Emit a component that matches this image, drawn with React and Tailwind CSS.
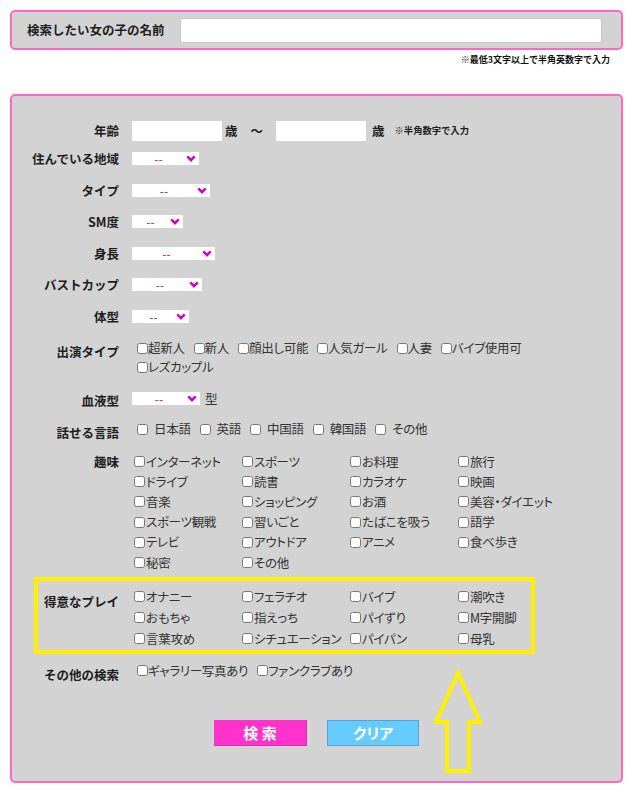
import React from 'react';

const jp = "font-['Noto_Sans_CJK_JP','Noto_Sans',sans-serif]";

function Label({ children, className = '' }) {
  return (
    <div className={'w-[107px] shrink-0 text-right font-bold text-[12.5px] text-[#1e1e1e] ' + className}>
      {children}
    </div>
  );
}

function Select({ className }) {
  return (
    <div className={'relative h-[13px] bg-white ' + className}>
      <select className="block w-full h-[13px] appearance-none bg-white border-0 p-0 pr-[14px] text-[12px] leading-[13px] text-[#cc00cc] outline-none [text-align-last:center]">
        <option>--</option>
      </select>
      <svg className="absolute right-[3px] top-[3px] pointer-events-none" width="10" height="7" viewBox="0 0 10 7">
        <path d="M1.3 1.3 L5 5.2 L8.7 1.3" fill="none" stroke="#cc00cc" strokeWidth="2.4" />
      </svg>
    </div>
  );
}

function Check({ text, className = '', gap = '' }) {
  return (
    <label className={'inline-flex items-center whitespace-nowrap ' + className}>
      <input type="checkbox" className="m-0 w-[11px] h-[11px] shrink-0" />
      <span className={"text-[12.5px] leading-[16px] text-[#333] tracking-[-0.3px] [font-feature-settings:'palt'] " + gap}>{text}</span>
    </label>
  );
}

const hobbies = [
  'インターネット', 'スポーツ', 'お料理', '旅行',
  'ドライブ', '読書', 'カラオケ', '映画',
  '音楽', 'ショッピング', 'お酒', '美容・ダイエット',
  'スポーツ観戦', '習いごと', 'たばこを吸う', '語学',
  'テレビ', 'アウトドア', 'アニメ', '食べ歩き',
  '秘密', 'その他',
];

const plays = [
  'オナニー', 'フェラチオ', 'バイブ', '潮吹き',
  'おもちゃ', '指えっち', 'パイずり', 'M字開脚',
  '言葉攻め', 'シチュエーション', 'パイパン', '母乳',
];

export default function App() {
  return (
    <div className={'w-[635px] min-h-[795px] bg-white pt-[10px] ' + jp}>
      {/* name search */}
      <div className="ml-[10px] w-[613px] h-[40px] flex items-center border-2 border-[#ff66cc] rounded-[5px] bg-[#d3d3d3]">
        <div className="pl-[15px] font-bold text-[12.5px] text-[#1e1e1e] leading-[14px]">検索したい女の子の名前</div>
        <input type="text" className="ml-auto mr-[19px] w-[422px] h-[25px] bg-white border border-[#c8c8c8] outline-none" />
      </div>
      <div className="mt-[4px] pr-[25px] text-right font-bold text-[9px] leading-[12px] text-[#111]">
        ※最低3文字以上で半角英数字で入力
      </div>

      {/* detail search */}
      <div className="relative mt-[28px] ml-[10px] w-[613px] border-2 border-[#ff66cc] rounded-[5px] bg-[#d3d3d3] pt-[25px] pb-[35px]">
        <div className="flex items-center h-[20px]">
          <Label className="leading-[14px]">年齢</Label>
          <div className="ml-[13px] flex items-center">
            <input type="text" className="w-[90px] h-[20px] bg-white border-0 outline-none" />
            <span className="ml-[3px] font-bold text-[12.5px] text-[#1e1e1e]">歳</span>
            <span className="ml-[13px] font-bold text-[12.5px] text-[#1e1e1e]">〜</span>
            <input type="text" className="ml-[13px] w-[90px] h-[20px] bg-white border-0 outline-none" />
            <span className="ml-[6px] font-bold text-[12.5px] text-[#1e1e1e]">歳</span>
            <span className="ml-[10px] font-bold text-[9.3px] text-[#1e1e1e]">※半角数字で入力</span>
          </div>
        </div>

        <div className="mt-[11px] flex items-center h-[13px]">
          <Label className="leading-[13px]">住んでいる地域</Label>
          <Select className="ml-[13px] w-[67px]" />
        </div>
        <div className="mt-[19px] flex items-center h-[13px]">
          <Label className="leading-[13px]">タイプ</Label>
          <Select className="ml-[13px] w-[78px]" />
        </div>
        <div className="mt-[18px] flex items-center h-[13px]">
          <Label className="leading-[13px]">SM度</Label>
          <Select className="ml-[13px] w-[51px]" />
        </div>
        <div className="mt-[19px] flex items-center h-[13px]">
          <Label className="leading-[13px]">身長</Label>
          <Select className="ml-[13px] w-[83px]" />
        </div>
        <div className="mt-[18px] flex items-center h-[13px]">
          <Label className="leading-[13px]">バストカップ</Label>
          <Select className="ml-[13px] w-[70px]" />
        </div>
        <div className="mt-[19px] flex items-center h-[13px]">
          <Label className="leading-[13px]">体型</Label>
          <Select className="ml-[13px] w-[57px]" />
        </div>

        <div className="mt-[15.5px] flex items-start h-[38px]">
          <Label className="leading-[19px] pt-[3px]">出演タイプ</Label>
          <div className="ml-[13px] leading-[19px]">
            <div className="flex h-[19px] items-center">
              <Check text="超新人" className="ml-[5px] mr-[4px]" />
              <Check text="新人" className="ml-[5px] mr-[4px]" />
              <Check text="顔出し可能" className="ml-[5px] mr-[4px]" />
              <Check text="人気ガール" className="ml-[5px] mr-[4px]" />
              <Check text="人妻" className="ml-[5px] mr-[4px]" />
              <Check text="バイブ使用可" className="ml-[5px] mr-[4px]" />
            </div>
            <div className="flex h-[19px] items-center">
              <Check text="レズカップル" className="ml-[5px]" />
            </div>
          </div>
        </div>

        <div className="mt-[15.5px] flex items-center h-[13px]">
          <Label className="leading-[13px] pt-[3px]">血液型</Label>
          <Select className="ml-[13px] w-[68px]" />
          <span className="ml-[5px] text-[12.5px] text-[#333] leading-[13px]">型</span>
        </div>

        <div className="mt-[14.5px] flex items-start h-[19px]">
          <Label className="leading-[19px] pt-[3px]">話せる言語</Label>
          <div className="ml-[13px] flex h-[19px] items-center">
            <Check text="日本語" className="ml-[5px] mr-[4px]" gap="ml-[6px]" />
            <Check text="英語" className="ml-[5px] mr-[4px]" gap="ml-[6px]" />
            <Check text="中国語" className="ml-[5px] mr-[4px]" gap="ml-[6px]" />
            <Check text="韓国語" className="ml-[5px] mr-[4px]" gap="ml-[6px]" />
            <Check text="その他" className="ml-[5px]" gap="ml-[6px]" />
          </div>
        </div>

        <div className="mt-[13px] flex items-start">
          <Label className="leading-[20px]">趣味</Label>
          <div className="ml-[13px] grid grid-cols-[108px_108px_108px_108px]">
            {hobbies.map((h) => (
              <div key={h} className="h-[20.2px] flex items-center">
                <Check text={h} className="ml-[2px]" gap="ml-[1px]" />
              </div>
            ))}
          </div>
        </div>

        <div className="mt-[4px] ml-[22px] w-[501px] border-4 border-[#fff000] pt-[5.5px] pb-[0.5px] flex items-start">
          <div className="w-[81px] shrink-0 text-right font-bold text-[12.5px] text-[#1e1e1e] leading-[21px] pt-[5px]">得意なプレイ</div>
          <div className="ml-[13px] grid grid-cols-[108px_108px_108px_75px]">
            {plays.map((p) => (
              <div key={p} className="h-[21px] flex items-center">
                <Check text={p} className="ml-[2px]" gap="ml-[1px]" />
              </div>
            ))}
          </div>
        </div>

        <div className="mt-[7.5px] flex items-start h-[19px]">
          <Label className="leading-[19px] pt-[4px]">その他の検索</Label>
          <div className="ml-[13px] flex h-[19px] items-center">
            <Check text="ギャラリー写真あり" className="ml-[5px] mr-[4px]" />
            <Check text="ファンクラブあり" className="ml-[5px]" />
          </div>
        </div>

        <div className="mt-[39.5px] flex justify-center gap-[20px]">
          <button type="button" className="w-[93px] h-[26px] bg-[#ff33cc] border-b border-r border-[#d92aad] text-white font-bold text-[15px] leading-[26px]">
            検 索
          </button>
          <button type="button" className="w-[92px] h-[26px] bg-[#66ccff] border border-[#4fa6dc] text-white font-bold text-[15px] leading-[24px] [font-feature-settings:'palt']">
            クリア
          </button>
        </div>

        {/* annotation arrow */}
        <svg className="absolute left-[418px] top-[572px] pointer-events-none" width="56" height="108" viewBox="0 0 56 108">
          <polygon
            points="28,5 50,54 39,54 39,103 17,103 17,54 6,54"
            fill="none"
            stroke="#fff000"
            strokeWidth="4"
            strokeLinejoin="miter"
          />
        </svg>
      </div>
    </div>
  );
}
